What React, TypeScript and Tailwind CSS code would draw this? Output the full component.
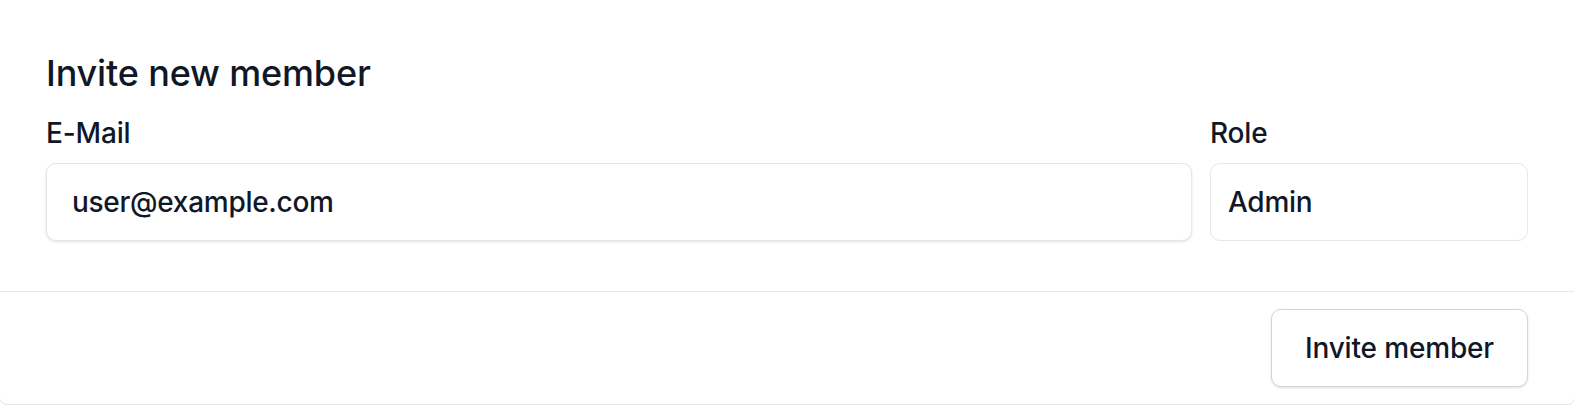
import React, { useState } from "react";

const App: React.FC = () => {
  const [email, setEmail] = useState("user@example.com");
  const [role, setRole] = useState("Admin");

  return (
    <div
      className="w-full overflow-hidden bg-white tracking-[-0.01em] text-[#101828]"
      style={{ fontFamily: "Inter, 'Noto Sans', sans-serif" }}
    >
      {/* Card (top and side edges cropped) */}
      <div className="-mx-px -mt-px rounded-b-lg border border-[#e5e7eb] bg-white">
        <div className="px-[46px] pt-[48px] pb-[50px]">
          <h2 className="text-[36px] leading-[50px] font-medium">
            Invite new member
          </h2>

          <div className="mt-[14px] flex gap-[18px]">
            <div className="flex flex-1 flex-col">
              <label className="text-[28px] leading-[42px] font-medium">
                E-Mail
              </label>
              <input
                type="email"
                value={email}
                onChange={(e) => setEmail(e.target.value)}
                className="mt-[9px] w-full rounded-[10px] border border-[#e5e7eb] bg-white px-[25px] py-[17px] text-[28px] leading-[42px] font-medium tracking-[-0.01em] text-[#101828] shadow-sm outline-none"
              />
            </div>

            <div className="flex w-[318px] flex-col">
              <label className="text-[28px] leading-[42px] font-medium">
                Role
              </label>
              <input
                type="text"
                value={role}
                onChange={(e) => setRole(e.target.value)}
                className="mt-[9px] w-full rounded-[10px] border border-[#e5e7eb] bg-white px-[17px] py-[17px] text-[28px] leading-[42px] font-medium tracking-[-0.01em] text-[#101828] outline-none"
              />
            </div>
          </div>
        </div>

        {/* Footer */}
        <div className="flex justify-end border-t border-[#e5e7eb] px-[46px] pt-[17px] pb-[17px]">
          <button className="rounded-[10px] border border-[#d1d5db] bg-white px-[33px] py-[17px] text-[28px] leading-[42px] font-medium text-[#101828] shadow-sm">
            Invite member
          </button>
        </div>
      </div>
    </div>
  );
};

export default App;
